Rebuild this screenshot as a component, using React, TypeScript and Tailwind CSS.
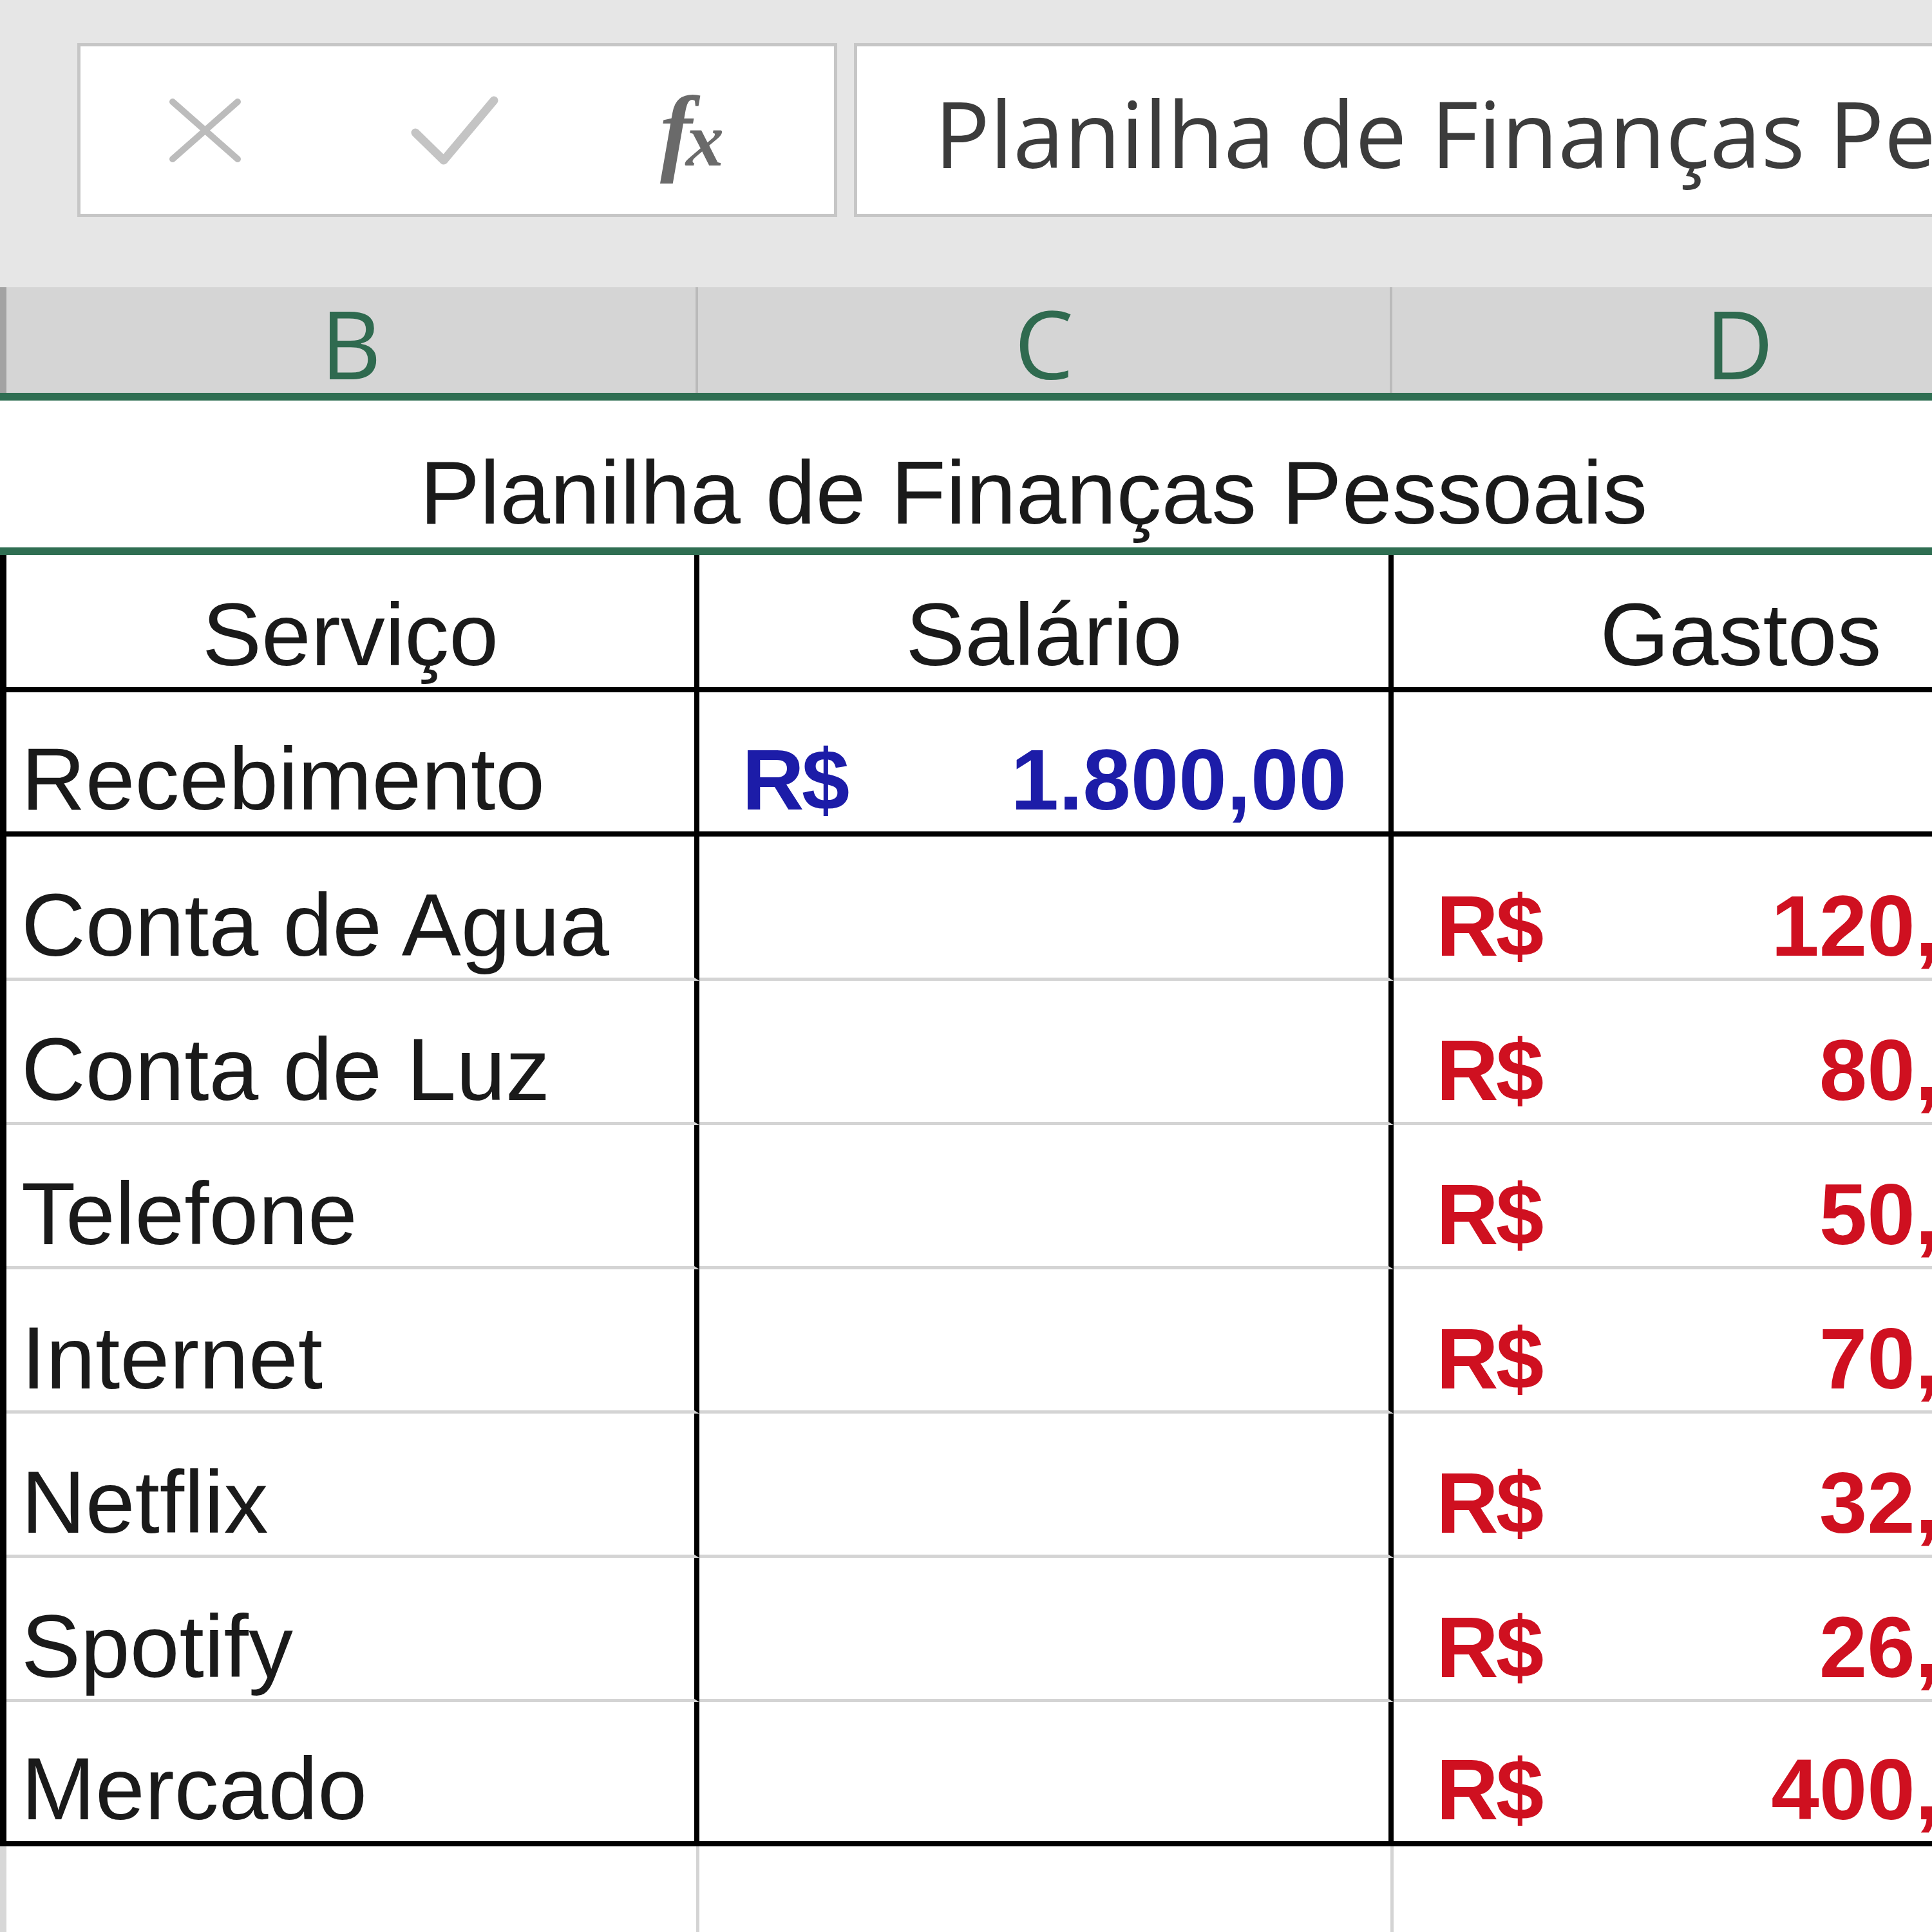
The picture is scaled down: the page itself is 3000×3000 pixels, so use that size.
type Expense = {
  label: string;
  amount: string;
};

const expenses: Expense[] = [
  { label: "Conta de Agua", amount: "120,00" },
  { label: "Conta de Luz", amount: "80,00" },
  { label: "Telefone", amount: "50,00" },
  { label: "Internet", amount: "70,00" },
  { label: "Netflix", amount: "32,90" },
  { label: "Spotify", amount: "26,90" },
  { label: "Mercado", amount: "400,00" },
];

const FormulaBar = () => {
  return (
    <div className="h-[446px] bg-[#e6e6e6] pt-[67px] pl-[120px] flex items-start">
      <div className="w-[1180px] h-[270px] shrink-0 border-[5px] border-[#c6c6c6] bg-white flex items-center pl-[133px]">
        <svg width="121" height="105" viewBox="0 0 121 105" className="shrink-0">
          <path d="M10 8 L111 97 M111 8 L10 97" stroke="#bcbcbc" strokeWidth="10" strokeLinecap="round" fill="none" />
        </svg>
        <svg width="138" height="109" viewBox="0 0 138 109" className="ml-[258px] shrink-0">
          <path d="M8 58 L52 101 L130 8" stroke="#c4c4c4" strokeWidth="13" strokeLinecap="round" strokeLinejoin="round" fill="none" />
        </svg>
        <span className="ml-[250px] flex items-end leading-none font-['Liberation_Serif',serif] italic font-bold text-[#6a6a6a]">
          <span className="text-[150px]">f</span>
          <span className="text-[118px] -ml-[10px]">x</span>
        </span>
      </div>
      <div className="ml-[26px] flex-1 h-[270px] border-[5px] border-r-0 border-[#c6c6c6] bg-white flex items-center pl-[120px] pt-[6px] overflow-hidden whitespace-nowrap font-['Open_Sans',sans-serif] text-[143px] leading-none text-[#3c3c3c]">
        Planilha de Finanças Pessoais
      </div>
    </div>
  );
};

const ColumnHeaders = () => {
  const letter =
    "flex items-center justify-center pt-[10px] font-['Open_Sans',sans-serif] text-[146px] leading-none text-[#2f6a4f]";
  return (
    <div className="flex h-[176px] w-[3242px] bg-[#d5d5d5] border-b-[12px] border-[#2f6e52]">
      <div className="w-[10px] shrink-0 bg-[#a3a3a3]" />
      <div className={`w-[1074px] shrink-0 border-r-[4px] border-[#bababa] ${letter}`}>B</div>
      <div className={`w-[1078px] shrink-0 border-r-[4px] border-[#bababa] ${letter}`}>C</div>
      <div className={`w-[1078px] shrink-0 ${letter}`}>D</div>
    </div>
  );
};

const App = () => {
  const label = "flex items-end pb-[13px] pl-[23px] text-[138px] leading-none text-[#1a1a1a] whitespace-nowrap";
  const heading = "flex items-end justify-center pb-[13px] text-[138px] leading-none text-[#1a1a1a]";
  const money = "flex items-end justify-between pb-[13px] pl-[66px] text-[134px] leading-none font-bold whitespace-nowrap";

  return (
    <div className="w-[3000px] h-[3000px] overflow-hidden bg-white font-['Liberation_Sans',Arial,sans-serif]">
      <FormulaBar />
      <ColumnHeaders />

      {/* merged title cell B1:D1, selected */}
      <div className="w-[3210px] h-[240px] border-b-[12px] border-[#2f6e52] flex items-end justify-center pb-[15px] text-[140px] leading-none text-[#1a1a1a] whitespace-nowrap">
        Planilha de Finanças Pessoais
      </div>

      <div className="flex h-[213px] w-[3242px]">
        <div className="w-[10px] shrink-0 bg-black" />
        <div className={`w-[1076px] shrink-0 border-r-[8px] border-b-[8px] border-black ${heading}`}>Serviço</div>
        <div className={`w-[1078px] shrink-0 border-r-[8px] border-b-[8px] border-black ${heading}`}>Salário</div>
        <div className={`w-[1078px] shrink-0 border-b-[8px] border-black ${heading}`}>Gastos</div>
      </div>

      <div className="flex h-[224px] w-[3242px]">
        <div className="w-[10px] shrink-0 bg-black" />
        <div className={`w-[1076px] shrink-0 border-r-[8px] border-b-[8px] border-black ${label}`}>Recebimento</div>
        <div className={`w-[1078px] shrink-0 border-r-[8px] border-b-[8px] border-black text-[#1c1ca8] pr-[65px] ${money}`}>
          <span className="tracking-[-4px]">R$</span>
          <span>1.800,00</span>
        </div>
        <div className="w-[1078px] shrink-0 border-b-[8px] border-black" />
      </div>

      {expenses.map((row, i) => {
        const last = i === expenses.length - 1;
        const bottom = last ? "border-b-[8px] border-b-black" : "border-b-[5px] border-b-[#d4d4d4]";
        return (
          <div key={row.label} className="flex h-[224px] w-[3242px]">
            <div className="w-[10px] shrink-0 bg-black" />
            <div className={`w-[1076px] shrink-0 border-r-[8px] border-r-black ${bottom} ${label}`}>{row.label}</div>
            <div className={`w-[1078px] shrink-0 border-r-[8px] border-r-black ${bottom}`} />
            <div className={`w-[1078px] shrink-0 text-[#cf1020] pr-[82px] ${bottom} ${money}`}>
              <span className="tracking-[-4px]">R$</span>
              <span>{row.amount}</span>
            </div>
          </div>
        );
      })}

      <div className="flex h-[140px] w-[3242px]">
        <div className="w-[10px] shrink-0 bg-[#d8d8d8]" />
        <div className="w-[1076px] shrink-0 border-r-[5px] border-[#d4d4d4]" />
        <div className="w-[1078px] shrink-0 border-r-[5px] border-[#d4d4d4]" />
        <div className="w-[1078px] shrink-0" />
      </div>
    </div>
  );
};

export default App;
